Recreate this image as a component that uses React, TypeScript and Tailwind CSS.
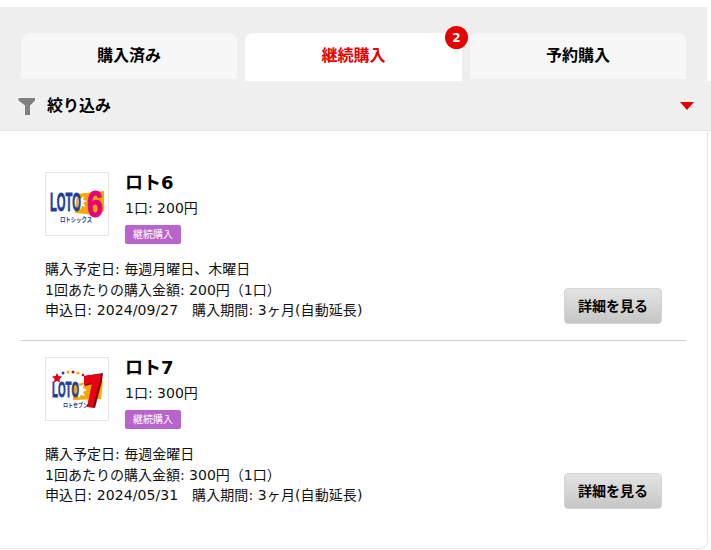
const F = '[font-family:"DejaVu_Sans","Noto_Sans_CJK_JP",sans-serif]';

function Logo6() {
  return (
    <svg width="64" height="64" viewBox="0 0 64 64" className="block">
      <polygon points="32,22 59,19 59,39 52,43 30,41" fill="#f5a800" />
      <polygon points="33,24 35,27 39,24 38,28 42,29 38,31 41,35 37,34 35,38 33,34" fill="#fff" />
      <text x="5" y="39" fontSize="26" fontWeight="700" fill="#1f3f98" stroke="#1f3f98" strokeWidth="0.8" fontFamily="Liberation Sans" textLength="31" lengthAdjust="spacingAndGlyphs">LOTO</text>
      <text x="42" y="45" fontSize="37" fontWeight="700" fill="#e6007e" stroke="#e6007e" strokeWidth="1" fontFamily="Liberation Sans" textLength="16" lengthAdjust="spacingAndGlyphs">6</text>
      <text x="15" y="50" fontSize="6.5" fontWeight="700" fill="#1f3f98" fontFamily="Noto Sans CJK JP" textLength="32" lengthAdjust="spacingAndGlyphs">ロトシックス</text>
    </svg>
  );
}

function Logo7() {
  return (
    <svg width="64" height="64" viewBox="0 0 64 64" className="block">
      <polygon points="28,27 58,24 56,42 28,43" fill="#f5a800" />
      <polygon points="33,26 35,29 39,27 38,31 42,33 38,35 40,39 36,38 34,41 32,37" fill="#fff" />
      <polygon points="12,16 13.5,19 17,19.5 14.5,22 15,25.5 12,24 9,25.5 9.5,22 7,19.5 10.5,19" fill="#e60012" />
      <circle cx="18" cy="16" r="1.5" fill="#1f3f98" />
      <circle cx="23" cy="15" r="1.5" fill="#f5a800" />
      <circle cx="28" cy="15" r="1.5" fill="#e60012" />
      <circle cx="33" cy="16" r="1.5" fill="#f5a800" />
      <circle cx="38" cy="18" r="1.3" fill="#e60012" />
      <text x="7" y="40" fontSize="22" fontWeight="700" fill="#1f3f98" stroke="#1f3f98" strokeWidth="0.8" fontFamily="Liberation Sans" textLength="27" lengthAdjust="spacingAndGlyphs">LOTO</text>
      <polygon points="39,19 58,16 57,24 50,51 42,50 48,27 40,29" fill="#7a0a10" />
      <polygon points="39,19 56,17 55,24 48,50 42,50 47,26 39,28" fill="#e60012" />
      <text x="18" y="50" fontSize="6" fontWeight="700" fill="#1f3f98" fontFamily="Noto Sans CJK JP" textLength="25" lengthAdjust="spacingAndGlyphs">ロトセブン</text>
    </svg>
  );
}

function Item({ name, logo, unit, d1, amount, date, last }: { name: string; logo: React.ReactNode; unit: string; d1: string; amount: string; date: string; last?: boolean }) {
  return (
    <div className={`mx-[21px] pl-6 pr-6 ${last ? "" : "pb-4 border-b border-[#ccc]"}`}>
      <div className="flex h-[74px]">
        <div className="w-16 h-16 border border-[#e6e6e6] shrink-0 mr-4"><div className="-m-px">{logo}</div></div>
        <div>
          <div className="text-[18px] leading-[22px] font-bold text-black">{name}</div>
          <div className="text-[14px] leading-[20px] mt-1 text-[#111]">1口: {unit}円</div>
          <div className="mt-[7px] w-[56px] h-[19px] rounded-[2px] bg-[#b964cc] text-white text-[10px] leading-[19px] text-center">継続購入</div>
        </div>
      </div>
      <div className="flex justify-between items-end mt-[13px]">
        <div className="text-[14px] leading-[20.5px] pb-[3.5px] text-[#111] whitespace-nowrap">
          <div>購入予定日: {d1}</div>
          <div>1回あたりの購入金額: {amount}円（1口）</div>
          <div className="tracking-[0.1px]">申込日: {date}&nbsp;&nbsp; 購入期間: 3ヶ月(自動延長)</div>
        </div>
        <button className="w-[98px] h-9 rounded-[4px] border border-[#d4d4d4] bg-gradient-to-b from-[#e3e3e3] to-[#c6c6c6] text-[14px] font-bold text-black">詳細を見る</button>
      </div>
    </div>
  );
}

export default function App() {
  return (
    <div className={`w-[711px] h-[550px] bg-white overflow-hidden pt-[7px] ${F}`}>
      <div className="w-[707px] bg-[#eeeeee] h-[74px] px-[21px] pt-[26px] flex gap-2">
        <div className="w-[216px] h-[46px] rounded-t-[8px] bg-[#f7f7f7] text-[16px] font-bold text-black flex items-center justify-center">購入済み</div>
        <div className="relative w-[217px] h-[48px] pb-[2px] rounded-t-[8px] bg-white text-[16px] font-bold text-[#e60000] flex items-center justify-center">
          継続購入
          <span className="absolute -right-[6px] -top-[7px] w-[23px] h-[23px] rounded-full bg-[#e60000] text-white text-[12px] font-bold flex items-center justify-center">2</span>
        </div>
        <div className="w-[216px] h-[46px] rounded-t-[8px] bg-[#f7f7f7] text-[16px] font-bold text-black flex items-center justify-center">予約購入</div>
      </div>
      <div className="w-[711px] h-[50px] bg-[#f0f0f0] flex items-center pl-[18px] pr-[17px] border-b border-[#e8e8e8]">
        <svg width="18" height="18" viewBox="0 0 18 18" className="mr-[11px]">
          <path d="M0.5 1h16.5v2.5L12 8.5V18H7V8.5L0.5 3.5z" fill="#808080" />
        </svg>
        <span className="text-[16px] font-bold text-black">絞り込み</span>
        <svg width="14" height="8" viewBox="0 0 14 8" className="ml-auto"><path d="M0 0h14L7 8z" fill="#e60000" /></svg>
      </div>
      <div className="w-[708px] h-[418px] border-r border-b border-[#e6e6e6] rounded-br-[8px] pt-[41px] flex flex-col gap-4">
        <Item name="ロト6" logo={<Logo6 />} unit="200" d1="毎週月曜日、木曜日" amount="200" date="2024/09/27" />
        <Item name="ロト7" logo={<Logo7 />} unit="300" d1="毎週金曜日" amount="300" date="2024/05/31" last />
      </div>
    </div>
  );
}
